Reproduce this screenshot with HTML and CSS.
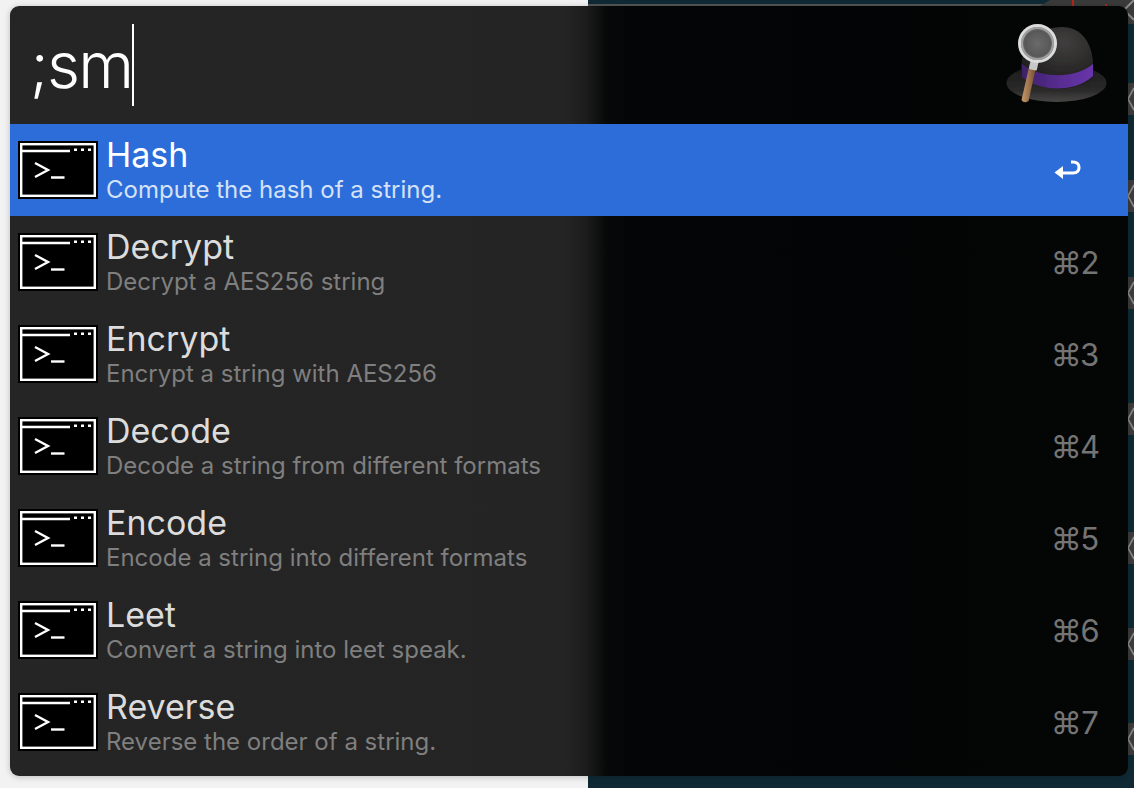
FILE: index.html
```html
<!DOCTYPE html>
<html lang="en">
<head>
<meta charset="utf-8">
<title>Alfred</title>
<link rel="stylesheet" href="styles.css">
</head>
<body>
<svg class="wallpaper" viewBox="0 0 1134 788" aria-hidden="true">
  <rect x="0" y="0" width="588" height="788" fill="#f2f2f2"/>
  <rect x="588" y="0" width="546" height="788" fill="#0f2a35"/>
  <rect x="588" y="4" width="460" height="2" fill="#555"/>
  <path d="M1040 6 L1050 0 H1134 V24 H1040 Z" fill="#3a3a3a"/>
  <path d="M1073 0 V6 M1106 4 V6" stroke="#b3261a" stroke-width="2"/>
  <path d="M1134 0 L1124 10 L1134 20" fill="none" stroke="#8a8a8a" stroke-width="2"/>
  <g fill="#3c3c3c">
    <rect x="1128" y="83" width="6" height="32"/>
    <rect x="1128" y="180" width="6" height="32"/>
    <rect x="1128" y="277" width="6" height="32"/>
    <rect x="1128" y="403" width="6" height="32"/>
    <rect x="1128" y="532" width="6" height="32"/>
    <rect x="1128" y="628" width="6" height="32"/>
    <rect x="1128" y="723" width="6" height="32"/>
  </g>
  <g fill="none" stroke="#8a8a8a" stroke-width="1.6">
    <path d="M1134 88 L1128 99 L1134 110"/>
    <path d="M1134 185 L1128 196 L1134 207"/>
    <path d="M1134 282 L1128 293 L1134 304"/>
    <path d="M1134 408 L1128 419 L1134 430"/>
    <path d="M1134 537 L1128 548 L1134 559"/>
    <path d="M1134 633 L1128 644 L1134 655"/>
    <path d="M1134 728 L1128 739 L1134 750"/>
  </g>
</svg>

<main class="window">
  <header class="search">
    <div class="query"><span>;sm</span><i class="caret"></i></div>
    <svg class="hat" viewBox="1003 20 110 90" aria-hidden="true">
      <defs>
        <radialGradient id="crown" cx="0.6" cy="0.25" r="0.85">
          <stop offset="0" stop-color="#403e3e"/>
          <stop offset="0.6" stop-color="#282727"/>
          <stop offset="1" stop-color="#161616"/>
        </radialGradient>
        <linearGradient id="brim" x1="0" y1="0" x2="0" y2="1">
          <stop offset="0" stop-color="#1a1a1a"/>
          <stop offset="0.7" stop-color="#2b2a2a"/>
          <stop offset="1" stop-color="#484747"/>
        </linearGradient>
        <linearGradient id="band" x1="0" y1="0" x2="1" y2="0">
          <stop offset="0" stop-color="#3d2168"/>
          <stop offset="0.5" stop-color="#562c90"/>
          <stop offset="1" stop-color="#6a35ab"/>
        </linearGradient>
        <radialGradient id="lens" cx="0.5" cy="0.5" r="0.55">
          <stop offset="0" stop-color="#6a6a6a"/>
          <stop offset="0.65" stop-color="#585858"/>
          <stop offset="1" stop-color="#a8a8a8"/>
        </radialGradient>
        <linearGradient id="handle" x1="0" y1="0" x2="1" y2="0">
          <stop offset="0" stop-color="#c59a6c"/>
          <stop offset="1" stop-color="#70492a"/>
        </linearGradient>
        <filter id="soft"><feGaussianBlur stdDeviation="0.5"/></filter>
      </defs>
      <g filter="url(#soft)">
        <ellipse cx="1056.5" cy="83" rx="50" ry="19" fill="url(#brim)"/>
        <path d="M1021 70 C1021 42 1040 27 1062 27 C1082 27 1093 44 1093 66 L1093 78 C1075 93 1040 92 1022 76 Z" fill="url(#crown)"/>
        <path d="M1022 64 C1038 78 1074 80 1093 64 L1093 76 C1075 93 1040 92 1022 77 Z" fill="url(#band)"/>
        <path d="M1030 63 L1037 63 L1028.5 101 Q1024 104 1021.5 100 Z" fill="url(#handle)"/>
        <rect x="1030" y="59" width="8" height="11" rx="1" fill="#c8c8c8" transform="rotate(12 1034 64)"/>
        <circle cx="1037.5" cy="43.5" r="18" fill="url(#lens)" stroke="#dcdcdc" stroke-width="3"/>
        <circle cx="1037.5" cy="43.5" r="15.5" fill="none" stroke="#a0a0a0" stroke-width="2"/>
      </g>
    </svg>
  </header>

  <ul class="results">
    <li class="row row-selected">
      <svg class="term" viewBox="0 0 80 58" aria-hidden="true"><use href="#term-glyph"/></svg>
      <div class="text"><div class="title">Hash</div><div class="sub">Compute the hash of a string.</div></div>
      <svg class="return" viewBox="0 0 28 22" aria-hidden="true"><path d="M9 7 L0.5 13.5 L9 20 L9 15.5 H19 C24 15.5 26.5 12.5 26.5 8.5 C26.5 4.5 24 1.5 19 1.5 H17 V4.5 H19 C22 4.5 23.5 6 23.5 8.5 C23.5 11 22 12.5 19 12.5 H9 Z" fill="#fff"/></svg>
    </li>
    <li class="row">
      <svg class="term" viewBox="0 0 80 58" aria-hidden="true"><use href="#term-glyph"/></svg>
      <div class="text"><div class="title">Decrypt</div><div class="sub">Decrypt a AES256 string</div></div>
      <div class="key">⌘2</div>
    </li>
    <li class="row">
      <svg class="term" viewBox="0 0 80 58" aria-hidden="true"><use href="#term-glyph"/></svg>
      <div class="text"><div class="title">Encrypt</div><div class="sub">Encrypt a string with AES256</div></div>
      <div class="key">⌘3</div>
    </li>
    <li class="row">
      <svg class="term" viewBox="0 0 80 58" aria-hidden="true"><use href="#term-glyph"/></svg>
      <div class="text"><div class="title">Decode</div><div class="sub">Decode a string from different formats</div></div>
      <div class="key">⌘4</div>
    </li>
    <li class="row">
      <svg class="term" viewBox="0 0 80 58" aria-hidden="true"><use href="#term-glyph"/></svg>
      <div class="text"><div class="title">Encode</div><div class="sub">Encode a string into different formats</div></div>
      <div class="key">⌘5</div>
    </li>
    <li class="row">
      <svg class="term" viewBox="0 0 80 58" aria-hidden="true"><use href="#term-glyph"/></svg>
      <div class="text"><div class="title">Leet</div><div class="sub">Convert a string into leet speak.</div></div>
      <div class="key">⌘6</div>
    </li>
    <li class="row">
      <svg class="term" viewBox="0 0 80 58" aria-hidden="true"><use href="#term-glyph"/></svg>
      <div class="text"><div class="title">Reverse</div><div class="sub">Reverse the order of a string.</div></div>
      <div class="key">⌘7</div>
    </li>
  </ul>
</main>

<svg class="defs" aria-hidden="true">
  <symbol id="term-glyph" viewBox="0 0 80 58">
    <rect width="80" height="58" fill="#000"/>
    <rect x="3.2" y="3.2" width="73.6" height="51.6" fill="none" stroke="#fff" stroke-width="2.4"/>
    <path d="M3 10 H52" stroke="#fff" stroke-width="2.6"/>
    <path d="M56 8.7 h3 M63 8.7 h3 M70 8.7 h3" stroke="#fff" stroke-width="2.6"/>
    <path d="M17 22 L30 29 L17 36" fill="none" stroke="#fff" stroke-width="2.4"/>
    <path d="M33 36.5 H46.5" stroke="#fff" stroke-width="2.4"/>
  </symbol>
</svg>
</body>
</html>
```

FILE: styles.css
```css
* { box-sizing: border-box; }

html, body {
  margin: 0;
  padding: 0;
  width: 1134px;
  height: 788px;
  overflow: hidden;
  background: #f2f2f2;
  font-family: Inter, "Liberation Sans", sans-serif;
}

body {
  position: relative;
  padding: 6px 6px 12px 10px;
}

.wallpaper {
  position: absolute;
  left: 0;
  top: 0;
  width: 1134px;
  height: 788px;
}

.defs {
  position: absolute;
  width: 0;
  height: 0;
}

.window {
  position: relative;
  width: 1118px;
  height: 770px;
  border-radius: 9px;
  overflow: hidden;
  display: flex;
  flex-direction: column;
  background: linear-gradient(to right, #252525 0, #242424 555px, #1c1c1c 576px, #070909 596px, #030506 620px, #040505 100%);
  box-shadow: 0 1px 6px rgba(0, 0, 0, 0.22);
}

.search {
  height: 118px;
  flex: none;
  display: flex;
  align-items: center;
  justify-content: space-between;
  padding: 0 15px 0 20px;
}

.query {
  display: flex;
  align-items: center;
  color: #fff;
  font-size: 64px;
  font-weight: 350;
  letter-spacing: -1.8px;
  line-height: 82px;
}

.caret {
  display: block;
  width: 2px;
  height: 82px;
  background: #fff;
}

.hat {
  width: 110px;
  height: 90px;
  flex: none;
}

.results {
  list-style: none;
  margin: 0;
  padding: 0;
}

.row {
  height: 92px;
  display: flex;
  align-items: center;
  padding: 0 28px 0 8px;
}

.row-selected {
  background: #2c6dd9;
}

.term {
  width: 80px;
  height: 58px;
  flex: none;
}

.text {
  flex: 1;
  margin-left: 8px;
  padding-bottom: 2px;
}

.title {
  font-size: 34px;
  line-height: 40px;
  color: #dcdcdc;
}

.sub {
  font-size: 24px;
  line-height: 28px;
  margin-top: 1px;
  color: #7f7f7f;
}

.row-selected .title { color: #fff; }
.row-selected .sub { color: #d4e2f7; }

.key {
  font-size: 31px;
  color: #747474;
  font-family: Inter, "DejaVu Sans", sans-serif;
  font-variant-numeric: tabular-nums;
  letter-spacing: -2px;
  padding-right: 2px;
}

.return {
  width: 28px;
  height: 22px;
  margin-right: 18px;
}
```
